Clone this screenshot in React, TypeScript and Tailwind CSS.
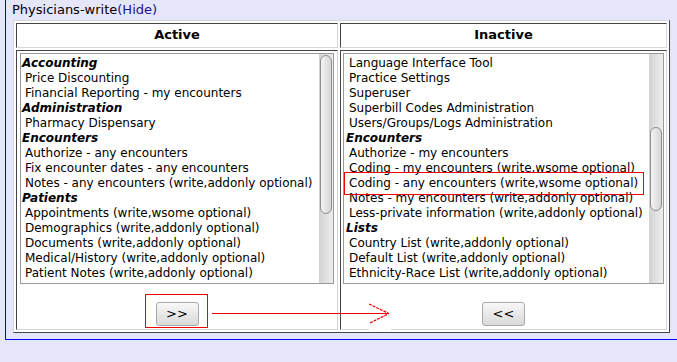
const ACTIVOS: [string, boolean][] = [
  ["Accounting", true],
  ["Price Discounting", false],
  ["Financial Reporting - my encounters", false],
  ["Administration", true],
  ["Pharmacy Dispensary", false],
  ["Encounters", true],
  ["Authorize - any encounters", false],
  ["Fix encounter dates - any encounters", false],
  ["Notes - any encounters (write,addonly optional)", false],
  ["Patients", true],
  ["Appointments (write,wsome optional)", false],
  ["Demographics (write,addonly optional)", false],
  ["Documents (write,addonly optional)", false],
  ["Medical/History (write,addonly optional)", false],
  ["Patient Notes (write,addonly optional)", false],
];

const INACTIVOS: [string, boolean][] = [
  ["Language Interface Tool", false],
  ["Practice Settings", false],
  ["Superuser", false],
  ["Superbill Codes Administration", false],
  ["Users/Groups/Logs Administration", false],
  ["Encounters", true],
  ["Authorize - my encounters", false],
  ["Coding - my encounters (write,wsome optional)", false],
  ["Coding - any encounters (write,wsome optional)", false],
  ["Notes - my encounters (write,addonly optional)", false],
  ["Less-private information (write,addonly optional)", false],
  ["Lists", true],
  ["Country List (write,addonly optional)", false],
  ["Default List (write,addonly optional)", false],
  ["Ethnicity-Race List (write,addonly optional)", false],
];

function Lista({
  items,
  ancho,
  relleno,
  thumbTop,
  thumbAlto,
}: {
  items: [string, boolean][];
  ancho: string;
  relleno: string;
  thumbTop: string;
  thumbAlto: string;
}) {
  return (
    <div className={`${ancho} h-[231px] border border-[#9a9a9a] bg-white flex overflow-hidden`}>
      <div className={`flex-1 pt-[2px] ${relleno} text-[12px] leading-[15px] whitespace-nowrap overflow-hidden`}>
        {items.map(([texto, grupo], i) =>
          grupo ? (
            <div key={i} className="h-[15px] pl-[1px] font-bold italic">
              {texto}
            </div>
          ) : (
            <div key={i} className="h-[15px] pl-[4px]">
              {texto}
            </div>
          )
        )}
      </div>
      <div className="w-[14px] bg-gradient-to-r from-[#d2d2d2] to-[#efefef]">
        <div
          className={`${thumbTop} ${thumbAlto} ml-[1px] w-[12px] rounded-[6px] border border-[#8e8e8e] bg-gradient-to-r from-[#f4f4f4] to-[#d6d6d6]`}
        />
      </div>
    </div>
  );
}

function Boton({ texto }: { texto: string }) {
  return (
    <button
      type="button"
      className="w-[43px] h-[24px] rounded-[3px] border border-[#a8a8a8] bg-gradient-to-b from-[#f8f8f8] to-[#d9d9d9] text-[13px] leading-none text-black"
    >
      {texto}
    </button>
  );
}

export default function App() {
  return (
    <div className="relative w-[677px] h-[362px] overflow-hidden bg-[#e6e6fa] font-['DejaVu_Sans',sans-serif] text-black">
      <div className="ml-[5px] h-[340px] border-l border-b border-[#0000ff] pl-[6px] pt-[2px]">
        <div className="text-[13px] leading-[15px]">
          Physicians-write<span className="text-[#14148c]">(Hide)</span>
        </div>
        <div className="mt-[3px] ml-[1px] w-[657px] border border-t-[#d6d6d6] border-l-[#d6d6d6] border-r-[#454545] border-b-[#454545] bg-white p-[2px] grid grid-cols-[322px_327px] gap-[2px]">
          <div className="h-[25px] pb-[1px] border border-t-[#454545] border-l-[#454545] border-r-[#d6d6d6] border-b-[#d6d6d6] flex items-center justify-center text-[13px] font-bold">
            Active
          </div>
          <div className="h-[25px] pb-[1px] border border-t-[#454545] border-l-[#454545] border-r-[#d6d6d6] border-b-[#d6d6d6] flex items-center justify-center text-[13px] font-bold">
            Inactive
          </div>
          <div className="h-[280px] border border-t-[#454545] border-l-[#454545] border-r-[#d6d6d6] border-b-[#d6d6d6] flex flex-col items-center">
            <div className="mt-[2px] ml-[3px] mr-[3px]">
              <Lista items={ACTIVOS} ancho="w-[314px]" relleno="pl-0" thumbTop="mt-[1px]" thumbAlto="h-[159px]" />
            </div>
            <div className="mt-[17px]">
              <Boton texto=">>" />
            </div>
          </div>
          <div className="h-[280px] border border-t-[#454545] border-l-[#454545] border-r-[#d6d6d6] border-b-[#d6d6d6] flex flex-col items-center">
            <div className="mt-[2px]">
              <Lista items={INACTIVOS} ancho="w-[321px]" relleno="pl-[1px]" thumbTop="mt-[73px]" thumbAlto="h-[84px]" />
            </div>
            <div className="mt-[17px]">
              <Boton texto="<<" />
            </div>
          </div>
        </div>
      </div>

      {/* anotaciones en rojo */}
      <div className="absolute left-[344px] top-[172px] w-[300px] h-[23px] border border-[#ee0000]" />
      <div className="absolute left-[145px] top-[294px] w-[63px] h-[34px] border border-[#ee0000]" />
      <svg className="absolute left-0 top-0 pointer-events-none" width="677" height="362">
        <rect x="369" y="329" width="22" height="2" fill="#ffffff" />
        <line x1="212" y1="313.5" x2="389" y2="313.5" stroke="#ee0000" strokeWidth="1" />
        <line x1="369" y1="304" x2="389" y2="313.5" stroke="#ee0000" strokeWidth="1.2" strokeDasharray="3 1" />
        <line x1="370" y1="323" x2="389" y2="313.5" stroke="#ee0000" strokeWidth="1.2" strokeDasharray="3 1" />
      </svg>
    </div>
  );
}
